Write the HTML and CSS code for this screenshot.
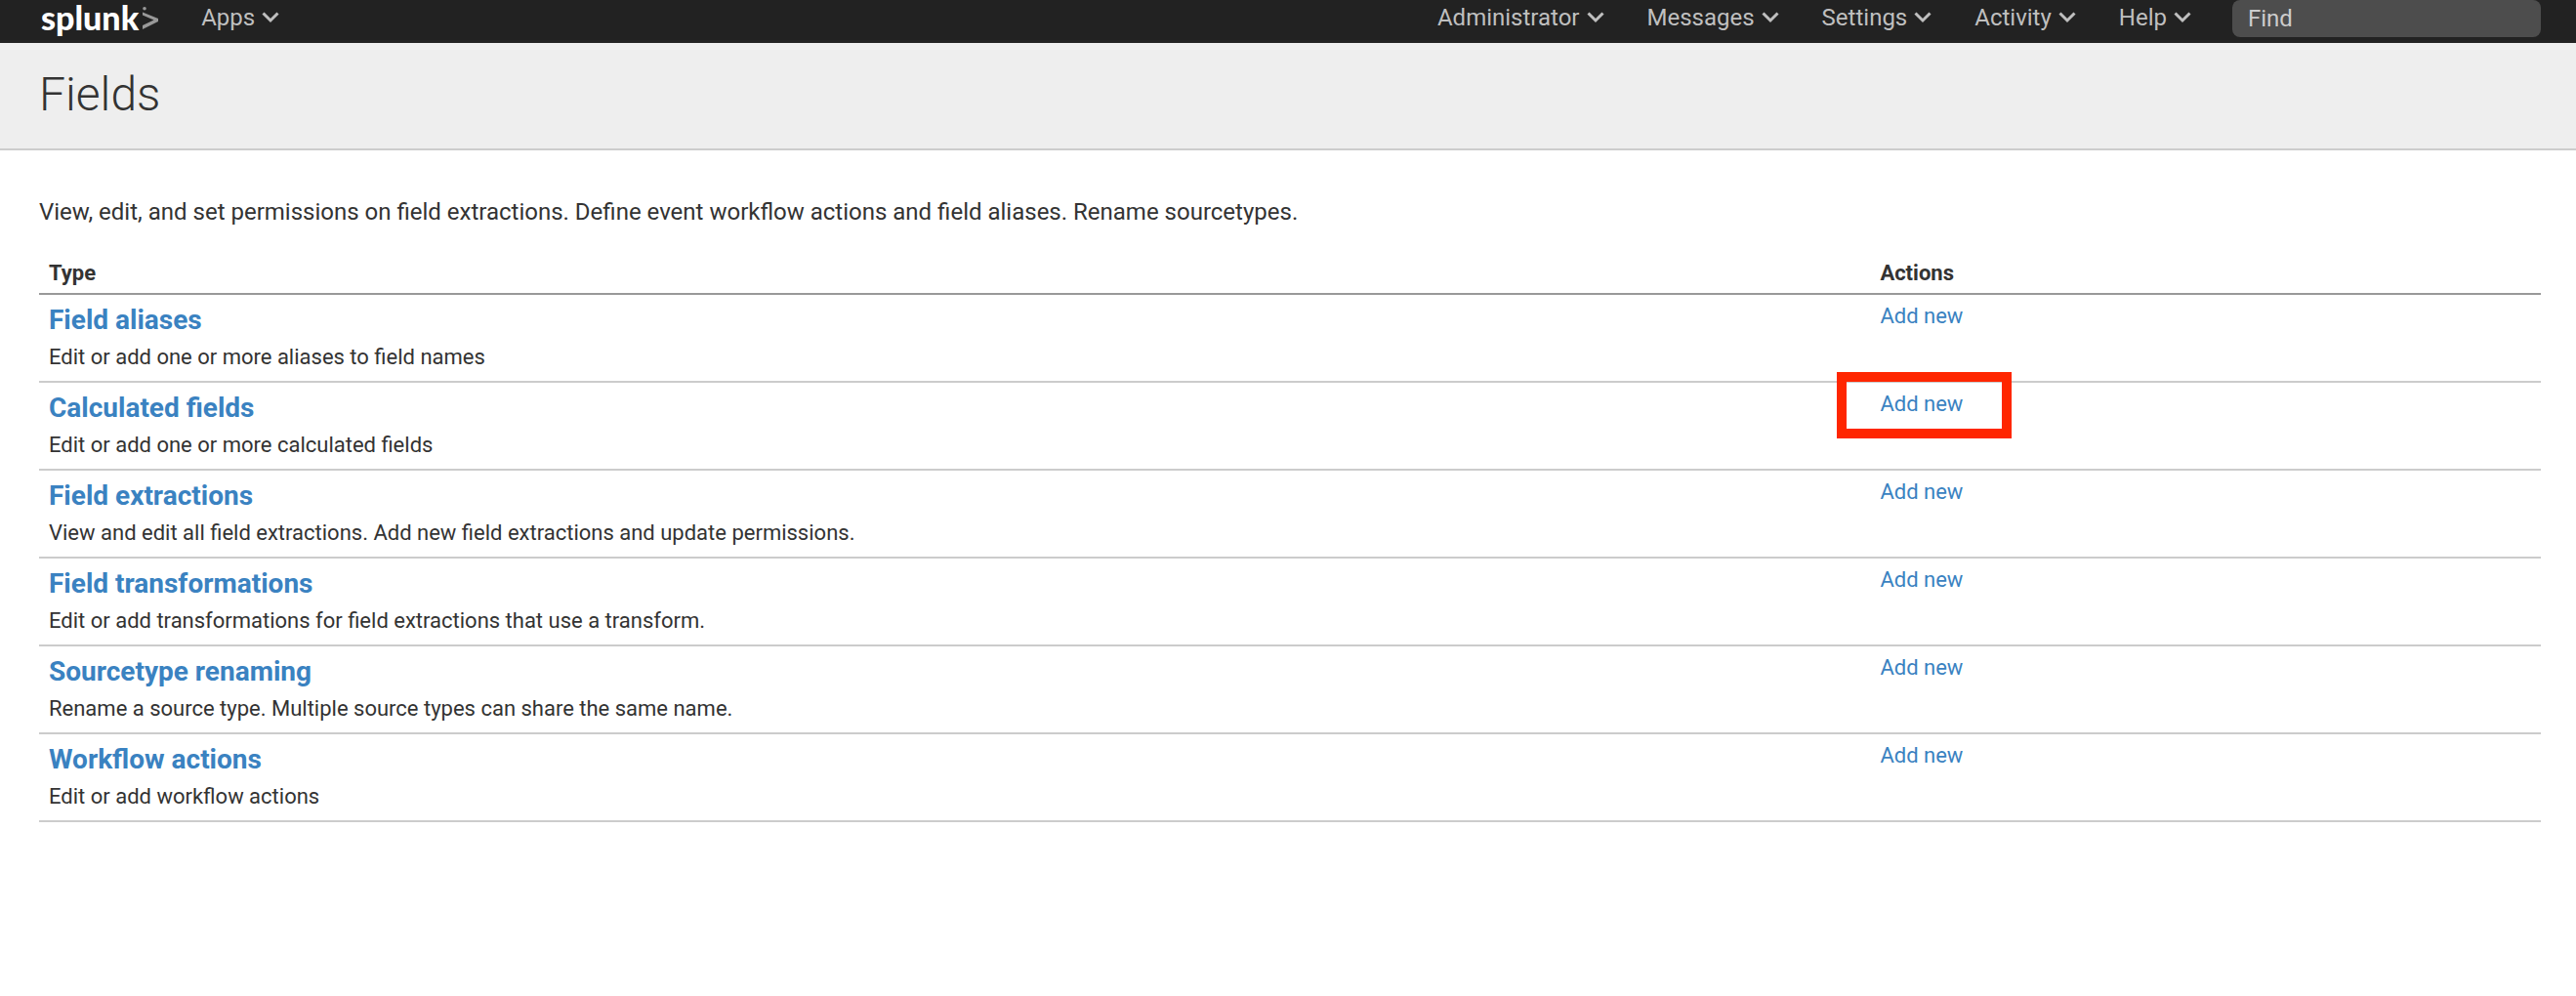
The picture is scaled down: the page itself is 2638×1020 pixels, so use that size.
FILE: index.html
```html
<!DOCTYPE html>
<html lang="en">
<head>
<meta charset="utf-8">
<title>Fields | Splunk</title>
<link rel="stylesheet" href="styles.css">
</head>
<body>
<header class="topbar">
  <a class="logo" href="#" aria-label="splunk home">
    <span class="logo-word">splunk</span>
    <svg class="logo-mark" viewBox="0 0 16 24" aria-hidden="true"><path d="M0 5.500 16 12V15L0 23V19L11.500 13.500 0 8.500Z"/><circle cx="2" cy="1.800" r="1.800"/></svg>
  </a>
  <nav class="menu">
    <button class="menu-item" type="button">Apps<svg class="chevron" viewBox="0 0 18 12" aria-hidden="true"><path d="M1.500 1.500 9 9 16.500 1.500"/></svg></button>
  </nav>
  <nav class="menu menu-right">
    <button class="menu-item" type="button">Administrator<svg class="chevron" viewBox="0 0 18 12" aria-hidden="true"><path d="M1.500 1.500 9 9 16.500 1.500"/></svg></button>
    <button class="menu-item" type="button">Messages<svg class="chevron" viewBox="0 0 18 12" aria-hidden="true"><path d="M1.500 1.500 9 9 16.500 1.500"/></svg></button>
    <button class="menu-item" type="button">Settings<svg class="chevron" viewBox="0 0 18 12" aria-hidden="true"><path d="M1.500 1.500 9 9 16.500 1.500"/></svg></button>
    <button class="menu-item" type="button">Activity<svg class="chevron" viewBox="0 0 18 12" aria-hidden="true"><path d="M1.500 1.500 9 9 16.500 1.500"/></svg></button>
    <button class="menu-item" type="button">Help<svg class="chevron" viewBox="0 0 18 12" aria-hidden="true"><path d="M1.500 1.500 9 9 16.500 1.500"/></svg></button>
  </nav>
  <input class="find" type="text" placeholder="Find" aria-label="Find">
</header>
<div class="page-header">
  <h1 class="page-title">Fields</h1>
</div>
<main class="content">
  <p class="intro">View, edit, and set permissions on field extractions. Define event workflow actions and field aliases. Rename sourcetypes.</p>
  <table class="fields">
    <thead>
      <tr><th class="col-type" scope="col">Type</th><th scope="col">Actions</th></tr>
    </thead>
    <tbody>
      <tr>
        <td><a class="type-link" href="#">Field aliases</a><p class="description">Edit or add one or more aliases to field names</p></td>
        <td><a class="action" href="#">Add new</a></td>
      </tr>
      <tr>
        <td><a class="type-link" href="#">Calculated fields</a><p class="description">Edit or add one or more calculated fields</p></td>
        <td><a class="action highlighted" href="#">Add new</a></td>
      </tr>
      <tr>
        <td><a class="type-link" href="#">Field extractions</a><p class="description">View and edit all field extractions. Add new field extractions and update permissions.</p></td>
        <td><a class="action" href="#">Add new</a></td>
      </tr>
      <tr>
        <td><a class="type-link" href="#">Field transformations</a><p class="description">Edit or add transformations for field extractions that use a transform.</p></td>
        <td><a class="action" href="#">Add new</a></td>
      </tr>
      <tr>
        <td><a class="type-link" href="#">Sourcetype renaming</a><p class="description">Rename a source type. Multiple source types can share the same name.</p></td>
        <td><a class="action" href="#">Add new</a></td>
      </tr>
      <tr>
        <td><a class="type-link" href="#">Workflow actions</a><p class="description">Edit or add workflow actions</p></td>
        <td><a class="action" href="#">Add new</a></td>
      </tr>
    </tbody>
  </table>
</main>
</body>
</html>
```
FILE: styles.css
```css
* {
  box-sizing: border-box;
}

body {
  margin: 0;
  background: #fff;
  color: #333;
  font-family: Roboto, "Liberation Sans", sans-serif;
  font-size: 22px;
  line-height: 28px;
}

a {
  color: #3a82c1;
  text-decoration: none;
}

.topbar {
  display: flex;
  align-items: flex-start;
  height: 44px;
  padding: 0 36px 0 42px;
  background: #222;
}

.logo {
  display: flex;
  gap: 4px;
  margin-right: 44px;
  color: #fff;
}

.logo-word {
  font-family: Lato, sans-serif;
  font-size: 34px;
  font-weight: 900;
  line-height: 36px;
}

.logo-mark {
  width: 16px;
  height: 24px;
  margin-top: 7px;
  fill: #999;
}

.menu {
  display: flex;
  gap: 44px;
}

.menu-right {
  margin-left: auto;
}

.menu-item {
  display: flex;
  align-items: center;
  gap: 7px;
  padding: 4px 0;
  border: 0;
  background: none;
  color: #bfbfbf;
  font: inherit;
  font-size: 24px;
  line-height: 28px;
}

.chevron {
  width: 18px;
  height: 12px;
  fill: none;
  stroke: #bfbfbf;
  stroke-width: 3;
}

.find {
  width: 316px;
  height: 38px;
  margin-left: 42px;
  padding: 0 16px;
  border: 0;
  border-radius: 8px;
  background: #4d4d4d;
  color: #ccc;
  font: inherit;
  font-size: 24px;
}

.find::placeholder {
  color: #ccc;
  opacity: 1;
}

.page-header {
  padding: 25px 40px 27px;
  border-bottom: 2px solid #ccc;
  background: #eee;
}

.page-title {
  margin: 0;
  font-size: 48px;
  font-weight: 300;
  line-height: 56px;
}

.content {
  padding: 47px 36px 48px 40px;
}

.intro {
  margin: 0;
  font-size: 24px;
  line-height: 32px;
}

.fields {
  width: 100%;
  margin-top: 33px;
  border-collapse: separate;
  border-spacing: 0;
  table-layout: fixed;
}

.col-type {
  width: 73.2%;
}

.fields th {
  padding: 0 10px 6px;
  border-bottom: 2px solid #999;
  text-align: left;
}

.fields td {
  padding: 8px 10px 10px;
  border-bottom: 2px solid #ccc;
  vertical-align: top;
}

.type-link {
  display: block;
  font-size: 28px;
  font-weight: 700;
  line-height: 36px;
}

.description {
  margin: 6px 0 0;
}

.action {
  position: relative;
  display: inline-block;
}

.highlighted::after {
  content: "";
  position: absolute;
  inset: -19px -50px -21px -44px;
  border: 10px solid #ff2600;
}
```
